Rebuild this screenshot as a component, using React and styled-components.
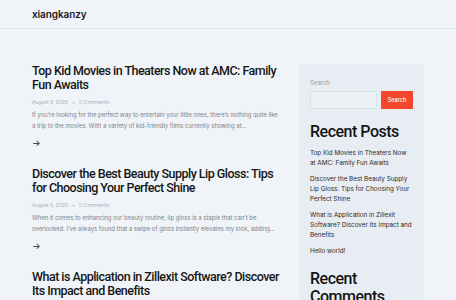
import React from "react";
import styled, { createGlobalStyle } from "styled-components";

const posts = [
  {
    title: "Top Kid Movies in Theaters Now at AMC: Family Fun Awaits",
    date: "August 5, 2025",
    comments: "0 Comments",
    excerpt:
      "If you’re looking for the perfect way to entertain your little ones, there’s nothing quite like a trip to the movies. With a variety of kid-friendly films currently showing at…",
  },
  {
    title: "Discover the Best Beauty Supply Lip Gloss: Tips for Choosing Your Perfect Shine",
    date: "August 5, 2025",
    comments: "0 Comments",
    excerpt:
      "When it comes to enhancing our beauty routine, lip gloss is a staple that can’t be overlooked. I’ve always found that a swipe of gloss instantly elevates my look, adding…",
  },
  {
    title: "What is Application in Zillexit Software? Discover Its Impact and Benefits",
    date: "August 5, 2025",
    comments: "0 Comments",
    excerpt: "",
  },
];

const recent = [
  "Top Kid Movies in Theaters Now at AMC: Family Fun Awaits",
  "Discover the Best Beauty Supply Lip Gloss: Tips for Choosing Your Perfect Shine",
  "What is Application in Zillexit Software? Discover Its Impact and Benefits",
  "Hello world!",
];

const App = () => {
  return (
    <>
      <GlobalStyle />
      <Page>
        <Header>
          <Logo>xiangkanzy</Logo>
        </Header>
        <Container>
          <Main>
            {posts.map((post) => (
              <Post key={post.title}>
                <PostTitle>{post.title}</PostTitle>
                <Meta>
                  {post.date}
                  <span className="dot">•</span>
                  {post.comments}
                </Meta>
                {post.excerpt && <Excerpt>{post.excerpt}</Excerpt>}
                {post.excerpt && <ReadMore>→</ReadMore>}
              </Post>
            ))}
          </Main>
          <Sidebar>
            <Label>Search</Label>
            <SearchRow>
              <SearchInput type="text" />
              <SearchButton>Search</SearchButton>
            </SearchRow>
            <WidgetTitle>Recent Posts</WidgetTitle>
            <RecentList>
              {recent.map((item) => (
                <li key={item}>{item}</li>
              ))}
            </RecentList>
            <WidgetTitle>Recent Comments</WidgetTitle>
          </Sidebar>
        </Container>
      </Page>
    </>
  );
};

const GlobalStyle = createGlobalStyle`
  html, body {
    margin: 0;
    padding: 0;
    background: #f0f4f8;
    font-family: Inter, "Noto Sans", sans-serif;
    color: #1c1c1c;
  }
  body {
    height: 300px;
    overflow: hidden;
  }
`;

const Page = styled.div`
  width: 456px;
  min-height: 300px;
  background: #f0f4f8;
`;

const Header = styled.header`
  height: 29px;
  border-bottom: 1px solid #dfe6ee;
  display: flex;
  align-items: center;
  padding: 0 32px;
  box-sizing: border-box;
`;

const Logo = styled.div`
  font-size: 10px;
  font-weight: 600;
  letter-spacing: -0.1px;
  color: #1a1a1a;
`;

const Container = styled.div`
  display: grid;
  grid-template-columns: 251px 125px;
  gap: 16px;
  padding: 35px 32px 0;
`;

const Main = styled.main`
  display: flex;
  flex-direction: column;
  gap: 19px;
`;

const Post = styled.article`
  display: flex;
  flex-direction: column;
`;

const PostTitle = styled.h2`
  margin: 0;
  font-family: Roboto, "Noto Sans", sans-serif;
  font-size: 12.5px;
  line-height: 14px;
  font-weight: 500;
  letter-spacing: -0.52px;
  color: #161616;
`;

const Meta = styled.div`
  margin-top: 6px;
  font-size: 5px;
  line-height: 8px;
  color: #a9b0b8;

  .dot {
    margin: 0 4px;
  }
`;

const Excerpt = styled.p`
  margin: 3px 0 0;
  max-width: 248px;
  font-size: 6px;
  line-height: 11px;
  letter-spacing: -0.05px;
  color: #7d838a;
`;

const ReadMore = styled.div`
  margin-top: 7px;
  height: 10px;
  font-size: 9px;
  line-height: 10px;
  color: #222;
`;

const Sidebar = styled.aside`
  background: #e7edf3;
  padding: 15px 11px 20px;
  min-height: 260px;
`;

const Label = styled.div`
  font-size: 6px;
  line-height: 8px;
  color: #9aa1a9;
`;

const SearchRow = styled.div`
  display: flex;
  gap: 4px;
  margin-top: 4px;
`;

const SearchInput = styled.input`
  width: 67px;
  height: 18px;
  box-sizing: border-box;
  border: 1px solid #d9e1e9;
  background: #ecf1f6;
  outline: none;
  padding: 0 4px;
`;

const SearchButton = styled.button`
  width: 32px;
  height: 18px;
  border: none;
  padding: 0;
  background: #f4482c;
  color: #fff;
  font-family: inherit;
  font-size: 5.5px;
  font-weight: 500;
`;

const WidgetTitle = styled.h3`
  margin: 14px 0 0;
  font-family: Roboto, "Noto Sans", sans-serif;
  font-size: 16px;
  line-height: 18px;
  font-weight: 500;
  letter-spacing: -0.5px;
  color: #141414;
`;

const RecentList = styled.ul`
  list-style: none;
  margin: 7px 0 0;
  padding: 0;
  display: flex;
  flex-direction: column;
  gap: 6px;

  li {
    font-size: 6.3px;
    line-height: 10px;
    color: #2a2a2a;
  }
`;

export default App;
